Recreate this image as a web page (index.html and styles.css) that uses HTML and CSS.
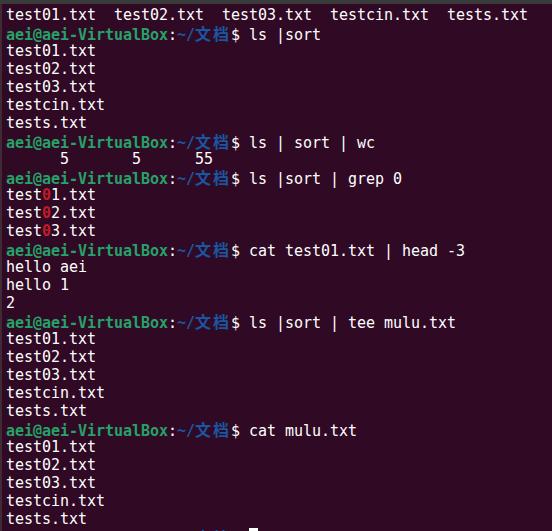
FILE: index.html
```html
<!DOCTYPE html>
<html>
<head>
<meta charset="utf-8">
<link rel="stylesheet" href="styles.css">
</head>
<body>
<div class="window">
<div class="topbar"></div>
<div class="term">
<div class="ln">test01.txt  test02.txt  test03.txt  testcin.txt  tests.txt</div>
<div class="ln"><span class="u">aei@aei-VirtualBox</span>:<span class="p">~/<span class="cjk">文档</span></span>$ ls |sort</div>
<div class="ln">test01.txt</div>
<div class="ln">test02.txt</div>
<div class="ln">test03.txt</div>
<div class="ln">testcin.txt</div>
<div class="ln">tests.txt</div>
<div class="ln"><span class="u">aei@aei-VirtualBox</span>:<span class="p">~/<span class="cjk">文档</span></span>$ ls | sort | wc</div>
<div class="ln">      5       5      55</div>
<div class="ln"><span class="u">aei@aei-VirtualBox</span>:<span class="p">~/<span class="cjk">文档</span></span>$ ls |sort | grep 0</div>
<div class="ln">test<span class="m">0</span>1.txt</div>
<div class="ln">test<span class="m">0</span>2.txt</div>
<div class="ln">test<span class="m">0</span>3.txt</div>
<div class="ln"><span class="u">aei@aei-VirtualBox</span>:<span class="p">~/<span class="cjk">文档</span></span>$ cat test01.txt | head -3</div>
<div class="ln">hello aei</div>
<div class="ln">hello 1</div>
<div class="ln">2</div>
<div class="ln"><span class="u">aei@aei-VirtualBox</span>:<span class="p">~/<span class="cjk">文档</span></span>$ ls |sort | tee mulu.txt</div>
<div class="ln">test01.txt</div>
<div class="ln">test02.txt</div>
<div class="ln">test03.txt</div>
<div class="ln">testcin.txt</div>
<div class="ln">tests.txt</div>
<div class="ln"><span class="u">aei@aei-VirtualBox</span>:<span class="p">~/<span class="cjk">文档</span></span>$ cat mulu.txt</div>
<div class="ln">test01.txt</div>
<div class="ln">test02.txt</div>
<div class="ln">test03.txt</div>
<div class="ln">testcin.txt</div>
<div class="ln">tests.txt</div>
<div class="ln"><span class="u">aei@aei-VirtualBox</span>:<span class="p">~/<span class="cjk">文档</span></span>$ <span class="cursor"> </span></div>
</div>
</div>
</body>
</html>
```
FILE: styles.css
```css
html, body {
  margin: 0;
  padding: 0;
  background: #300a24;
  overflow: hidden;
}
.window {
  width: 552px;
  height: 531px;
  overflow: hidden;
  background: #300a24;
  display: flex;
  flex-direction: column;
}
.topbar {
  height: 4px;
  flex: none;
  background: #3a3a3a;
}
.term {
  padding: 2px 0 0 4px;
  border-left: 2px solid #3f2a36;
  font-family: "DejaVu Sans Mono", monospace;
  font-size: 15px;
  letter-spacing: -0.03px;
  color: #ffffff;
}
.ln {
  height: 18px;
  line-height: 18px;
  white-space: pre;
}
.u {
  color: #26a269;
  font-weight: bold;
}
.p {
  color: #1a56a0;
  font-weight: bold;
}
.cjk {
  font-family: "Noto Sans CJK SC", sans-serif;
  font-size: 16px;
  letter-spacing: 2px;
  font-weight: bold;
}
.m {
  color: #c01c28;
  font-weight: bold;
}
.cursor {
  display: inline-block;
  width: 9px;
  height: 18px;
  background: #ffffff;
  vertical-align: top;
}
```
